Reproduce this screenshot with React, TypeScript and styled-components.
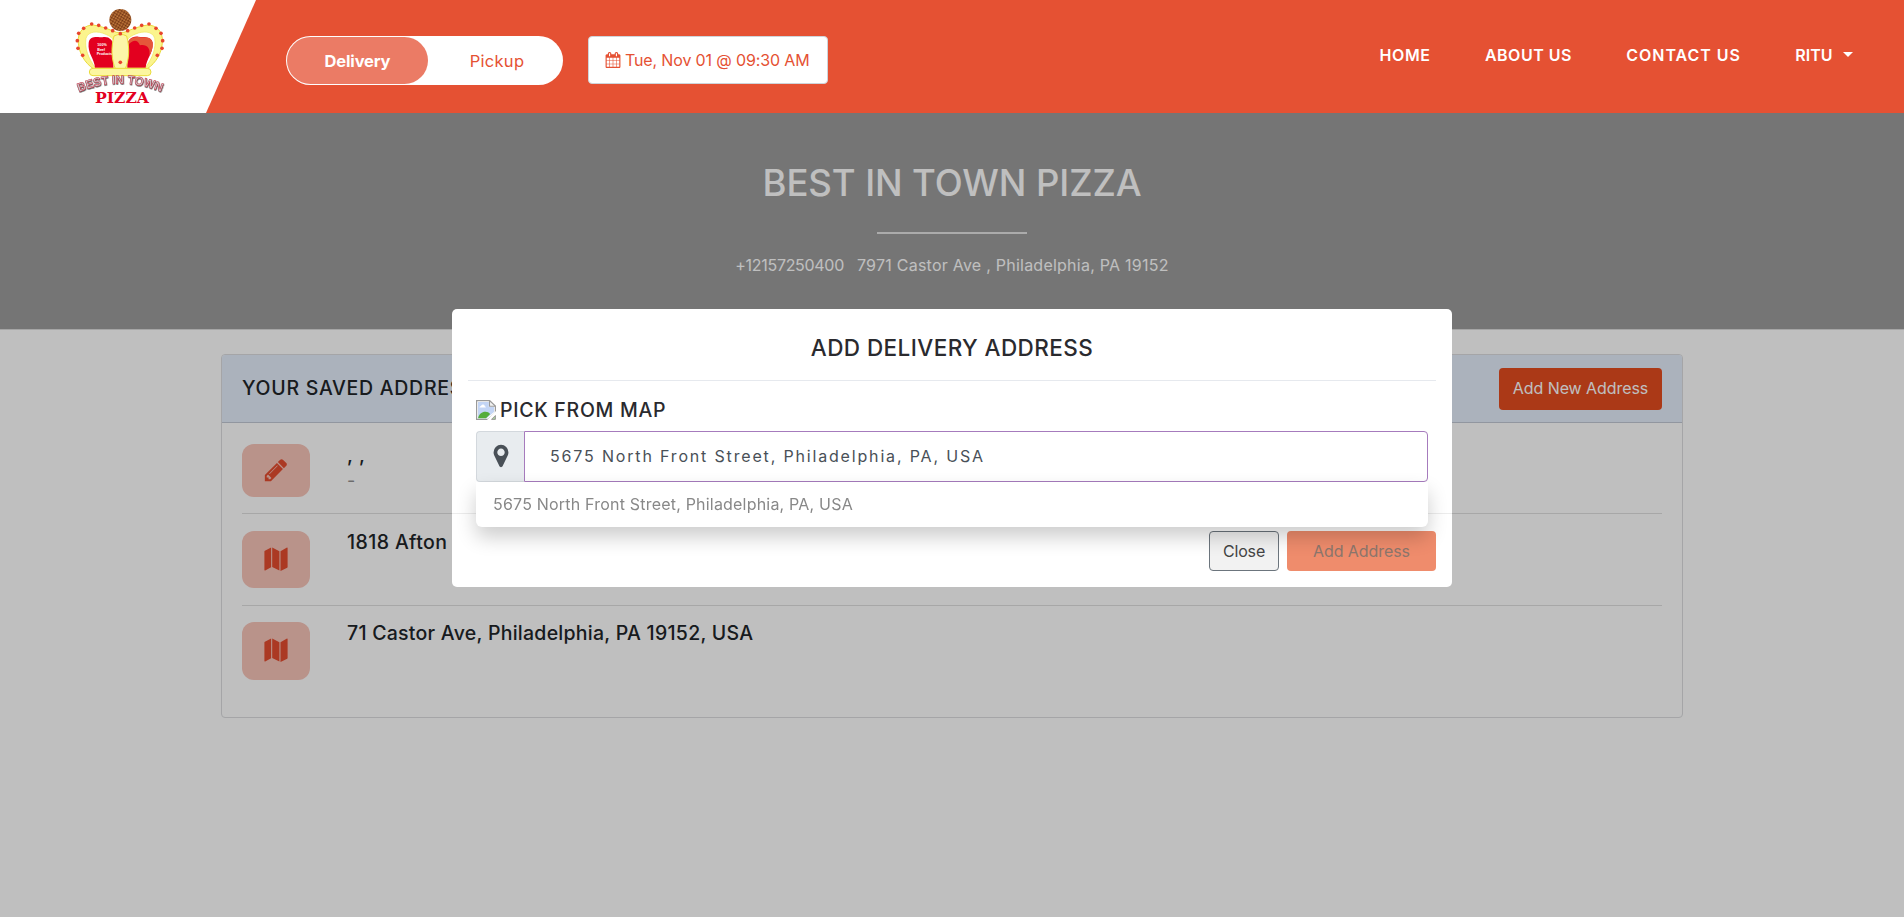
import React from "react";
import styled, { createGlobalStyle } from "styled-components";

const GlobalStyle = createGlobalStyle`
  *, *::before, *::after { box-sizing: border-box; }
  html, body { margin: 0; padding: 0; height: 100%; overflow: hidden; }
  body {
    background: #fff;
    font-family: Inter, "Open Sans", sans-serif;
    font-size: 16px;
    line-height: 24px;
    color: #212529;
  }
  button { font-family: inherit; }
`;

/* ---------- Header ---------- */

const Header = styled.header`
  position: relative;
  z-index: 30;
  display: flex;
  height: 113px;
  background: #e55133;
`;

const LogoPanel = styled.a`
  display: block;
  width: 256px;
  height: 113px;
  padding-left: 70px;
  background: #fff;
  clip-path: polygon(0 0, 100% 0, 206px 100%, 0 100%);
`;

const OrderToggle = styled.div`
  display: flex;
  width: 277px;
  height: 49px;
  margin: 36px 0 0 30px;
  padding: 1px;
  border-radius: 25px;
  background: #fff;
`;

const ToggleOption = styled.button<{ $active?: boolean }>`
  width: ${(p) => (p.$active ? "141px" : "134px")};
  height: 47px;
  margin: 0;
  padding: ${(p) => (p.$active ? "0" : "0 0 0 4px")};
  border: 0;
  border-radius: 24px;
  background: ${(p) => (p.$active ? "#eb7b65" : "transparent")};
  color: ${(p) => (p.$active ? "#fff" : "#e55133")};
  font-size: 16.5px;
  font-weight: ${(p) => (p.$active ? 700 : 400)};
  letter-spacing: ${(p) => (p.$active ? "-0.15px" : "0.3px")};
`;

const DateButton = styled.button`
  display: flex;
  align-items: center;
  gap: 4px;
  width: 240px;
  height: 48px;
  margin: 36px 0 0 25px;
  padding: 0 16px;
  border: 1px solid #ced4da;
  border-radius: 4px;
  background: #fff;
  color: #e55133;
  font-size: 16px;
  letter-spacing: -0.14px;
  white-space: nowrap;
`;

const Nav = styled.nav`
  display: flex;
  gap: 54.3px;
  margin: 43px 51px 0 auto;
`;

const NavLink = styled.a<{ $tracking: number }>`
  display: flex;
  align-items: center;
  height: 24px;
  color: #fff;
  font-weight: 600;
  letter-spacing: ${(p) => p.$tracking}px;
  white-space: nowrap;
`;

const Caret = styled.span`
  margin: -2px 0 0 10.5px;
  border-top: 5px solid #fff;
  border-right: 5px solid transparent;
  border-left: 5px solid transparent;
`;

/* ---------- Store banner ---------- */

const Banner = styled.section`
  display: flex;
  flex-direction: column;
  align-items: center;
  height: 217px;
  padding-top: 46px;
  border-bottom: 1px solid #dcdcdc;
  background: #9c9c9c;
  color: #fff;
`;

const BannerTitle = styled.h1`
  margin: 0;
  font-size: 36.5px;
  line-height: 48px;
  font-weight: 500;
  letter-spacing: -0.1px;
`;

const BannerRule = styled.div`
  width: 150px;
  height: 2px;
  margin-top: 25px;
  background: #e5e5e5;
`;

const BannerInfo = styled.div`
  display: flex;
  gap: 13px;
  margin-top: 19px;
`;

const Phone = styled.span`
  letter-spacing: -0.3px;
`;

const StreetAddress = styled.span`
  letter-spacing: 0.24px;
`;

/* ---------- Saved addresses ---------- */

const Card = styled.section`
  width: 1462px;
  height: 364px;
  margin: 24px auto 0 221px;
  border: 1px solid #dcdddf;
  border-radius: 4px;
  overflow: hidden;
`;

const CardHeader = styled.div`
  display: flex;
  align-items: center;
  justify-content: space-between;
  height: 68px;
  padding: 0 20px;
  border-bottom: 1px solid #c2c8d5;
  background: #e5eefb;
`;

const CardTitle = styled.h2`
  margin: -2px 0 0;
  font-size: 19.5px;
  font-weight: 500;
  letter-spacing: 0.72px;
`;

const AddNewButton = styled.button`
  width: 163px;
  height: 42px;
  padding: 0 0 1px;
  border: 0;
  border-radius: 4px;
  background: #e54c1f;
  color: #fff;
  font-size: 16px;
  letter-spacing: -0.07px;
`;

const AddressList = styled.div`
  padding: 0 20px;
`;

const AddressRow = styled.div<{ $height: number; $top: number }>`
  display: flex;
  height: ${(p) => p.$height}px;
  padding-top: ${(p) => p.$top}px;

  &:not(:last-child) {
    border-bottom: 1px solid #dfdfdf;
  }
`;

const IconTile = styled.div<{ $height: number }>`
  display: flex;
  align-items: center;
  justify-content: center;
  width: 68px;
  height: ${(p) => p.$height}px;
  padding-bottom: 2px;
  border-radius: 12px;
  background: #f7c4b9;
  color: #e54c2f;
`;

const AddressText = styled.div`
  margin-left: 37px;
`;

const AddressLine = styled.div<{ $tracking: number }>`
  color: #212529;
  font-size: 19.5px;
  font-weight: 500;
  line-height: 22px;
  letter-spacing: ${(p) => p.$tracking}px;
`;

const AddressNote = styled.div`
  margin-top: 4px;
  color: #909090;
  font-size: 18px;
  line-height: 22px;
`;

/* ---------- Modal ---------- */

const Backdrop = styled.div`
  position: fixed;
  inset: 0;
  z-index: 20;
  padding-top: 309px;
  background: rgba(0, 0, 0, 0.25);
`;

const Dialog = styled.div`
  width: 1000px;
  height: 278px;
  margin: 0 auto;
  border-radius: 5px;
  background: #fff;
`;

const DialogTitle = styled.h2`
  height: 72px;
  margin: 0 16px;
  padding-top: 27px;
  border-bottom: 1px solid #e6e9ee;
  color: #2a2a2e;
  font-size: 22.5px;
  font-weight: 500;
  line-height: 24px;
  letter-spacing: 0.42px;
  text-align: center;
`;

const DialogBody = styled.div`
  height: 133px;
  padding: 16px 24px 0;
  border-bottom: 1px solid #ececec;
`;

const PickLabel = styled.div`
  display: flex;
  align-items: center;
  gap: 4px;
  height: 26px;
  margin-bottom: 8px;
  color: #2a2a2e;
  font-size: 19.5px;
  font-weight: 500;
  letter-spacing: 0.72px;
`;

const SearchGroup = styled.div`
  position: relative;
  display: flex;
  height: 51px;
`;

const SearchAddon = styled.span`
  display: flex;
  align-items: center;
  justify-content: center;
  width: 48px;
  padding: 0 0 1px 1px;
  border: 1px solid #d3d8dd;
  border-right: 0;
  border-radius: 4px 0 0 4px;
  background: #e8ecef;
  color: #495057;
`;

const SearchField = styled.div`
  display: flex;
  align-items: center;
  flex: 1;
  padding: 0 0 1px 25px;
  border: 1px solid #a67bbd;
  border-radius: 0 4px 4px 0;
  color: #495057;
  letter-spacing: 1.83px;
`;

const Suggestions = styled.ul`
  position: absolute;
  top: 51px;
  right: 0;
  left: 0;
  height: 45px;
  margin: 0;
  padding: 0 17px;
  border-radius: 0 0 6px 6px;
  background: #fff;
  box-shadow: 0 10px 20px rgba(0, 0, 0, 0.2);
  list-style: none;
`;

const Suggestion = styled.li`
  color: #888;
  line-height: 45px;
  letter-spacing: 0.2px;
`;

const DialogFooter = styled.div`
  display: flex;
  justify-content: flex-end;
  gap: 8px;
  padding: 17px 16px 16px;
`;

const CloseButton = styled.button`
  width: 70px;
  height: 40px;
  padding: 0 0 1px;
  border: 1px solid #6c757d;
  border-radius: 4px;
  background: #f2f2f2;
  color: #444;
  font-size: 16px;
  letter-spacing: -0.16px;
`;

const SubmitButton = styled.button`
  width: 149px;
  height: 40px;
  padding: 0 0 1px;
  border: 0;
  border-radius: 4px;
  background: #ef8c6c;
  color: #8c766c;
  font-size: 16px;
  letter-spacing: -0.07px;
`;

/* ---------- Drawings ---------- */

const LogoName = styled.text`
  font: 700 36px "Liberation Sans", sans-serif;
  fill: #c9cbce;
  stroke: #d8344a;
  stroke-width: 1.5px;
  filter: drop-shadow(1px 2px 0 #333);
`;

const STUDS: [number, number][] = [
  [65, 72], [41, 85], [26, 100], [22, 122], [24, 145], [38, 166],
  [86, 76], [107, 84], [128, 92], [151, 101], [173, 92], [194, 84], [215, 76],
  [237, 72], [258, 85], [273, 100], [278, 122], [276, 145], [262, 166], [151, 187],
];

function Logo() {
  return (
    <svg width="100" height="110" viewBox="0 0 300 330" aria-label="Best In Town Pizza">
      <defs>
        <pattern id="crust" width="8" height="8" patternUnits="userSpaceOnUse" patternTransform="rotate(30)">
          <rect width="8" height="8" fill="#8f4a1e" />
          <circle cx="3" cy="3" r="2.3" fill="#c98545" />
          <circle cx="7" cy="7" r="1.4" fill="#5c2b10" />
        </pattern>
        <path id="arch" d="M27 276 Q150 226 276 276" />
      </defs>
      <circle cx="151" cy="60" r="33" fill="url(#crust)" />
      <path
        d="M70 206 C45 190 22 155 25 115 C28 85 55 70 80 77 C105 82 125 92 140 97 L162 97 C177 92 197 82 222 77 C247 70 274 85 277 115 C280 155 257 190 232 206 Z"
        fill="#fbf48d"
        stroke="#e9dc3c"
        strokeWidth="3"
      />
      <path d="M76 203 C55 175 43 145 48 115 C54 92 85 93 105 102 C120 108 130 115 133 128 L132 203 Z" fill="#fff" stroke="#efe559" strokeWidth="2" />
      <path d="M226 203 C247 175 259 145 254 115 C248 92 217 93 197 102 C182 108 172 115 169 128 L170 203 Z" fill="#fff" stroke="#efe559" strokeWidth="2" />
      <path d="M75 203 C73 175 52 160 56 128 C60 105 85 112 97 112 C115 108 129 118 131 140 L130 203 Z" fill="#e3001f" />
      <path d="M227 203 C229 175 250 160 248 128 C244 107 220 112 205 110 C185 108 173 118 171 140 L172 203 Z" fill="#e3001f" />
      <path d="M171 140 C173 118 185 110 205 111 C222 113 244 107 248 128 C250 145 243 158 238 168 C243 142 228 132 210 136 C200 112 182 124 171 140 Z" fill="#e5573a" />
      <path d="M132 108 Q151 98 170 108 C180 145 177 180 166 206 L136 206 C125 180 122 145 132 108 Z" fill="#fcf6a8" stroke="#e9dc3c" strokeWidth="3" />
      <rect x="58" y="205" width="185" height="22" rx="11" fill="#fcf6a0" stroke="#e9dc3c" strokeWidth="3" />
      {STUDS.map(([x, y]) => (
        <circle key={`${x}-${y}`} cx={x} cy={y} r="5.5" fill="#e8452c" />
      ))}
      <g fill="#fff" fontFamily="Liberation Sans" fontWeight="700" fontSize="11">
        <text x="82" y="138" textLength="28">100%</text>
        <text x="82" y="152" textLength="23">Beef</text>
        <text x="80" y="166" textLength="46">Products</text>
      </g>
      <LogoName>
        <textPath href="#arch" textLength="254" lengthAdjust="spacingAndGlyphs">BEST IN TOWN</textPath>
      </LogoName>
      <text x="75" y="308" fill="#e3001f" fontFamily="DejaVu Serif" fontWeight="700" fontSize="43" textLength="162" lengthAdjust="spacingAndGlyphs">
        PIZZA
      </text>
    </svg>
  );
}

function CalendarIcon() {
  return (
    <svg width="16" height="16" viewBox="64 0 1664 1792" fill="currentColor">
      <path d="M192 1664h288v-288h-288v288zm352 0h320v-288h-320v288zm-352-352h288v-320h-288v320zm352 0h320v-320h-320v320zm-352-384h288v-288h-288v288zm736 736h320v-288h-320v288zm-384-736h320v-288h-320v288zm768 736h288v-288h-288v288zm-384-352h320v-320h-320v320zm-352-864v-288q0-13-9.5-22.5t-22.5-9.5h-64q-13 0-22.5 9.5t-9.5 22.5v288q0 13 9.5 22.5t22.5 9.5h64q13 0 22.5-9.5t9.5-22.5zm736 864h288v-320h-288v320zm-384-384h320v-288h-320v288zm384 0h288v-288h-288v288zm32-480v-288q0-13-9.5-22.5t-22.5-9.5h-64q-13 0-22.5 9.5t-9.5 22.5v288q0 13 9.5 22.5t22.5 9.5h64q13 0 22.5-9.5t9.5-22.5zm384-64v1280q0 52-38 90t-90 38h-1408q-52 0-90-38t-38-90v-1280q0-52 38-90t90-38h128v-96q0-66 47-113t113-47h64q66 0 113 47t47 113v96h384v-96q0-66 47-113t113-47h64q66 0 113 47t47 113v96h128q52 0 90 38t38 90z" />
    </svg>
  );
}

function PencilIcon() {
  return (
    <svg width="26" height="26" viewBox="0 0 1792 1792" fill="currentColor">
      <path d="M491 1536l91-91-235-235-91 91v107h128v128h107zm523-928q0-22-22-22-10 0-17 7l-542 542q-7 7-7 17 0 22 22 22 10 0 17-7l542-542q7-7 7-17zm-54-192l416 416-832 832h-416v-416zm683 96q0 53-37 90l-166 166-416-416 166-165q36-38 90-38 53 0 91 38l235 234q37 39 37 91z" />
    </svg>
  );
}

function MapIcon() {
  return (
    <svg width="24" height="24" viewBox="0 0 24 24" fill="currentColor">
      <path d="M.4 4.6Q.4 4.1.9 3.8L7.1.6V20.2L1.2 23.4Q.4 23.7.4 23ZM8.2.6 15.4 4.2V23.6L8.2 20ZM16.5 4.2 23 .6Q23.6.4 23.6 1V20Q23.6 20.4 23.2 20.7L16.5 23.9Z" />
    </svg>
  );
}

function MarkerIcon() {
  return (
    <svg width="26" height="26" viewBox="0 0 1792 1792" fill="currentColor">
      <path d="M1152 640q0-106-75-181t-181-75-181 75-75 181 75 181 181 75 181-75 75-181zm256 0q0 109-33 179l-364 774q-16 33-47.5 52t-67.5 19-67.5-19-46.5-52l-365-774q-33-70-33-179 0-212 150-362t362-150 362 150 150 362z" />
    </svg>
  );
}

function MissingImageIcon() {
  return (
    <svg width="20" height="20" viewBox="0 0 20 20">
      <path d="M.6.6H13.5L19.4 6.2V13L12 19.4H.6Z" fill="#fff" stroke="#9a9a9a" strokeWidth="1.2" />
      <path d="M2 2H12.8V7H18V12L10.5 18.2H2Z" fill="#c3d5f5" />
      <path d="M3.5 7.5Q3.5 6 5 6 5.5 4.2 7.2 4.5 8.8 4.7 8.8 6.3 10 6.5 9.8 7.5Z" fill="#fff" />
      <path d="M2 18.2Q3 13.2 8 11.8 12 11 14.2 14L10 18.2Z" fill="#55ad3b" />
      <path d="M13.5.6V6.2H19.4Z" fill="#f4f4f4" stroke="#9a9a9a" strokeWidth="1.1" />
      <path d="M11 20 20 11V14.5L14.5 20Z" fill="#fff" />
      <path d="M19.4 15.5V19.4H15.5Z" fill="#a9cf9d" stroke="#9a9a9a" strokeWidth="1" />
    </svg>
  );
}

export default function App() {
  return (
    <>
      <GlobalStyle />
      <Header>
        <LogoPanel>
          <Logo />
        </LogoPanel>
        <OrderToggle>
          <ToggleOption $active>Delivery</ToggleOption>
          <ToggleOption>Pickup</ToggleOption>
        </OrderToggle>
        <DateButton>
          <CalendarIcon />
          Tue, Nov 01 @ 09:30 AM
        </DateButton>
        <Nav>
          <NavLink $tracking={0.6}>HOME</NavLink>
          <NavLink $tracking={0.5}>ABOUT US</NavLink>
          <NavLink $tracking={0.98}>CONTACT US</NavLink>
          <NavLink $tracking={0}>
            RITU
            <Caret />
          </NavLink>
        </Nav>
      </Header>

      <Banner>
        <BannerTitle>BEST IN TOWN PIZZA</BannerTitle>
        <BannerRule />
        <BannerInfo>
          <Phone>+12157250400</Phone>
          <StreetAddress>7971 Castor Ave , Philadelphia, PA 19152</StreetAddress>
        </BannerInfo>
      </Banner>

      <Card>
        <CardHeader>
          <CardTitle>YOUR SAVED ADDRESSES</CardTitle>
          <AddNewButton>Add New Address</AddNewButton>
        </CardHeader>
        <AddressList>
          <AddressRow $height={91} $top={21}>
            <IconTile $height={53}>
              <PencilIcon />
            </IconTile>
            <AddressText>
              <AddressLine $tracking={0.6}>, ,</AddressLine>
              <AddressNote>-</AddressNote>
            </AddressText>
          </AddressRow>
          <AddressRow $height={92} $top={17}>
            <IconTile $height={57}>
              <MapIcon />
            </IconTile>
            <AddressText>
              <AddressLine $tracking={0.4}>1818 Afton Street</AddressLine>
            </AddressText>
          </AddressRow>
          <AddressRow $height={100} $top={16}>
            <IconTile $height={58}>
              <MapIcon />
            </IconTile>
            <AddressText>
              <AddressLine $tracking={0.26}>71 Castor Ave, Philadelphia, PA 19152, USA</AddressLine>
            </AddressText>
          </AddressRow>
        </AddressList>
      </Card>

      <Backdrop>
        <Dialog role="dialog">
          <DialogTitle>ADD DELIVERY ADDRESS</DialogTitle>
          <DialogBody>
            <PickLabel>
              <MissingImageIcon />
              PICK FROM MAP
            </PickLabel>
            <SearchGroup>
              <SearchAddon>
                <MarkerIcon />
              </SearchAddon>
              <SearchField>5675 North Front Street, Philadelphia, PA, USA</SearchField>
              <Suggestions>
                <Suggestion>5675 North Front Street, Philadelphia, PA, USA</Suggestion>
              </Suggestions>
            </SearchGroup>
          </DialogBody>
          <DialogFooter>
            <CloseButton>Close</CloseButton>
            <SubmitButton>Add Address</SubmitButton>
          </DialogFooter>
        </Dialog>
      </Backdrop>
    </>
  );
}
